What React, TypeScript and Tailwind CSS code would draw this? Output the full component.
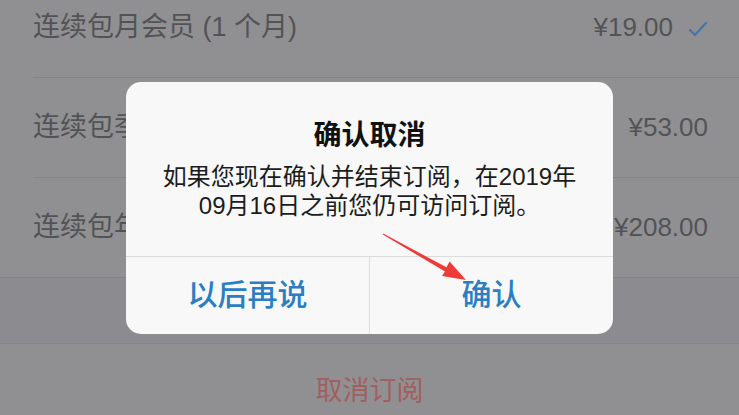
import React from "react";

const font = { fontFamily: "'Liberation Sans', 'Noto Sans CJK SC', sans-serif" };

function Row({
  label,
  price,
  check,
  inset = true,
}: {
  label: string;
  price: string;
  check?: boolean;
  inset?: boolean;
}) {
  return (
    <div className={`h-[100px] pl-[33px] ${inset ? "" : "border-b border-[#848487]"}`}>
      <div
        className={`flex h-full items-center justify-between pr-[31px] ${
          inset ? "border-b border-[#848487]" : ""
        }`}
      >
        <span className="text-[27px] text-[#535355]">{label}</span>
        <div className="flex items-center gap-[15px]">
          <span className="text-[26px] text-[#535355]">{price}</span>
          {check && (
            <svg width="20" height="16" viewBox="0 0 20 16" className="mt-[2px]">
              <polyline
                points="2,9 7,14 18,2"
                fill="none"
                stroke="#4675ad"
                strokeWidth="2.4"
                strokeLinecap="round"
                strokeLinejoin="round"
              />
            </svg>
          )}
        </div>
      </div>
    </div>
  );
}

export default function App() {
  return (
    <div className="relative h-[415px] w-[739px] overflow-hidden bg-[#909093]" style={font}>
      <div className="-mt-[22px] flex flex-col">
        <Row label="连续包月会员 (1 个月)" price="¥19.00" check />
        <Row label="连续包季会员 (3 个月)" price="¥53.00" />
        <Row label="连续包年会员 (12 个月)" price="¥208.00" inset={false} />
        <div className="h-[66px] border-b border-[#858588] bg-[#8c8c90]" />
        <div className="flex h-[94px] items-center justify-center">
          <span className="text-[27px] text-[#a15f5f]">取消订阅</span>
        </div>
      </div>

      <div className="absolute left-[126px] top-[82px] flex h-[252px] w-[487px] flex-col overflow-hidden rounded-[15px] bg-[#f8f8f8]">
        <div className="flex h-[174px] flex-col items-center pt-[37px]">
          <div className="text-[28px] font-bold leading-[34px] text-[#111]">确认取消</div>
          <div className="mt-[9px] text-center text-[24px] leading-[29px] text-[#1c1c1c]">
            <div>如果您现在确认并结束订阅，在2019年</div>
            <div>09月16日之前您仍可访问订阅。</div>
          </div>
        </div>
        <div className="flex flex-1 border-t border-[#dcdcdc]">
          <div className="flex flex-1 items-center justify-center pb-[2px] text-[30px] font-medium text-[#2a7fc4]">
            以后再说
          </div>
          <div className="flex flex-1 items-center justify-center border-l border-[#dcdcdc] pb-[2px] text-[30px] font-medium text-[#2a7fc4]">
            确认
          </div>
        </div>
      </div>

      <svg className="pointer-events-none absolute left-0 top-0" width="739" height="415">
        <polygon
          points="383.2,233.6 446.5,267.3 449.6,261.5 466,280 442,276.1 445,271.6 382.8,234.4"
          fill="#f03a3a"
        />
      </svg>
    </div>
  );
}
